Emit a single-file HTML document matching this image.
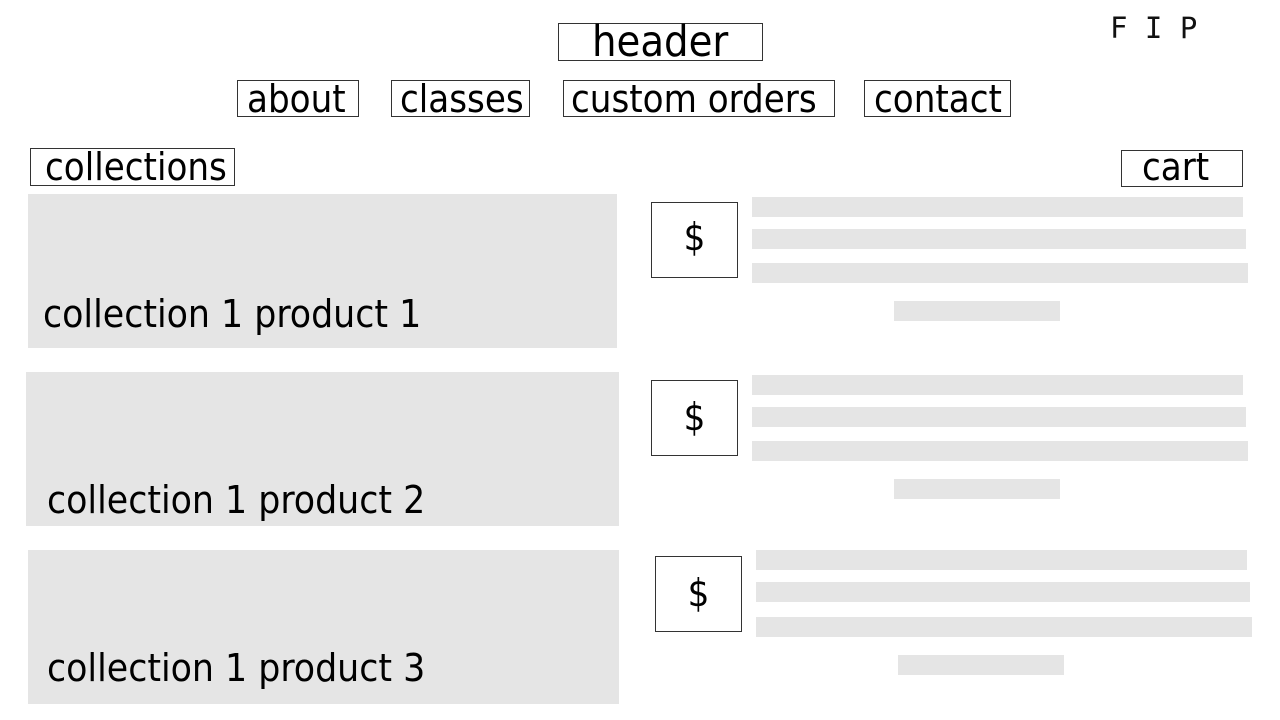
<!DOCTYPE html>
<html><head><meta charset="utf-8"><style>
body{margin:0;width:1280px;height:720px;background:#fff;position:relative;overflow:hidden;font-family:"DejaVu Sans Condensed","DejaVu Sans","Liberation Sans",sans-serif;font-stretch:condensed;color:#000}
.a{position:absolute;box-sizing:border-box;white-space:nowrap}
.b{border:1.5px solid #333;display:flex;align-items:center;font-size:38px;line-height:1}
.c{justify-content:center}
.g{position:absolute;background:#e5e5e5}
.t{position:absolute;font-size:38.7px;line-height:1;white-space:nowrap}
</style></head><body>
<div class="a b" style="left:558px;top:23px;width:205px;height:38px;font-size:43px;padding-left:33px">header</div>
<div class="a" style="left:1110px;top:10px;font-family:'DejaVu Sans Mono',monospace;font-stretch:normal;font-size:29px;line-height:36px;color:#111">F I P</div>
<div class="a b" style="left:237px;top:80px;width:122px;height:37px;padding-left:9px">about</div>
<div class="a b" style="left:391px;top:80px;width:139px;height:37px;padding-left:8px">classes</div>
<div class="a b" style="left:563px;top:80px;width:272px;height:37px;padding-left:7px">custom orders</div>
<div class="a b" style="left:864px;top:80px;width:147px;height:37px;padding-left:9px">contact</div>
<div class="a b" style="left:30px;top:148px;width:205px;height:38px;padding-left:14px">collections</div>
<div class="a b" style="left:1121px;top:150px;width:122px;height:37px;padding-left:20px;padding-bottom:4px">cart</div>

<div class="g" style="left:28px;top:194px;width:589px;height:154px"></div>
<div class="t" style="left:43px;top:296px">collection 1 product 1</div>
<div class="g" style="left:26px;top:372px;width:593px;height:154px"></div>
<div class="t" style="left:47px;top:482px">collection 1 product 2</div>
<div class="g" style="left:28px;top:550px;width:591px;height:154px"></div>
<div class="t" style="left:47px;top:650px">collection 1 product 3</div>

<div class="a b c" style="left:651px;top:202px;width:87px;height:76px;font-size:38px;padding-bottom:6px">$</div>
<div class="g" style="left:752px;top:197px;width:491px;height:20px"></div>
<div class="g" style="left:752px;top:229px;width:494px;height:20px"></div>
<div class="g" style="left:752px;top:263px;width:496px;height:20px"></div>
<div class="g" style="left:894px;top:301px;width:166px;height:20px"></div>

<div class="a b c" style="left:651px;top:380px;width:87px;height:76px;font-size:38px;padding-bottom:2px">$</div>
<div class="g" style="left:752px;top:375px;width:491px;height:20px"></div>
<div class="g" style="left:752px;top:407px;width:494px;height:20px"></div>
<div class="g" style="left:752px;top:441px;width:496px;height:20px"></div>
<div class="g" style="left:894px;top:479px;width:166px;height:20px"></div>

<div class="a b c" style="left:655px;top:556px;width:87px;height:76px;font-size:38px;padding-bottom:2px">$</div>
<div class="g" style="left:756px;top:550px;width:491px;height:20px"></div>
<div class="g" style="left:756px;top:582px;width:494px;height:20px"></div>
<div class="g" style="left:756px;top:617px;width:496px;height:20px"></div>
<div class="g" style="left:898px;top:655px;width:166px;height:20px"></div>
</body></html>
